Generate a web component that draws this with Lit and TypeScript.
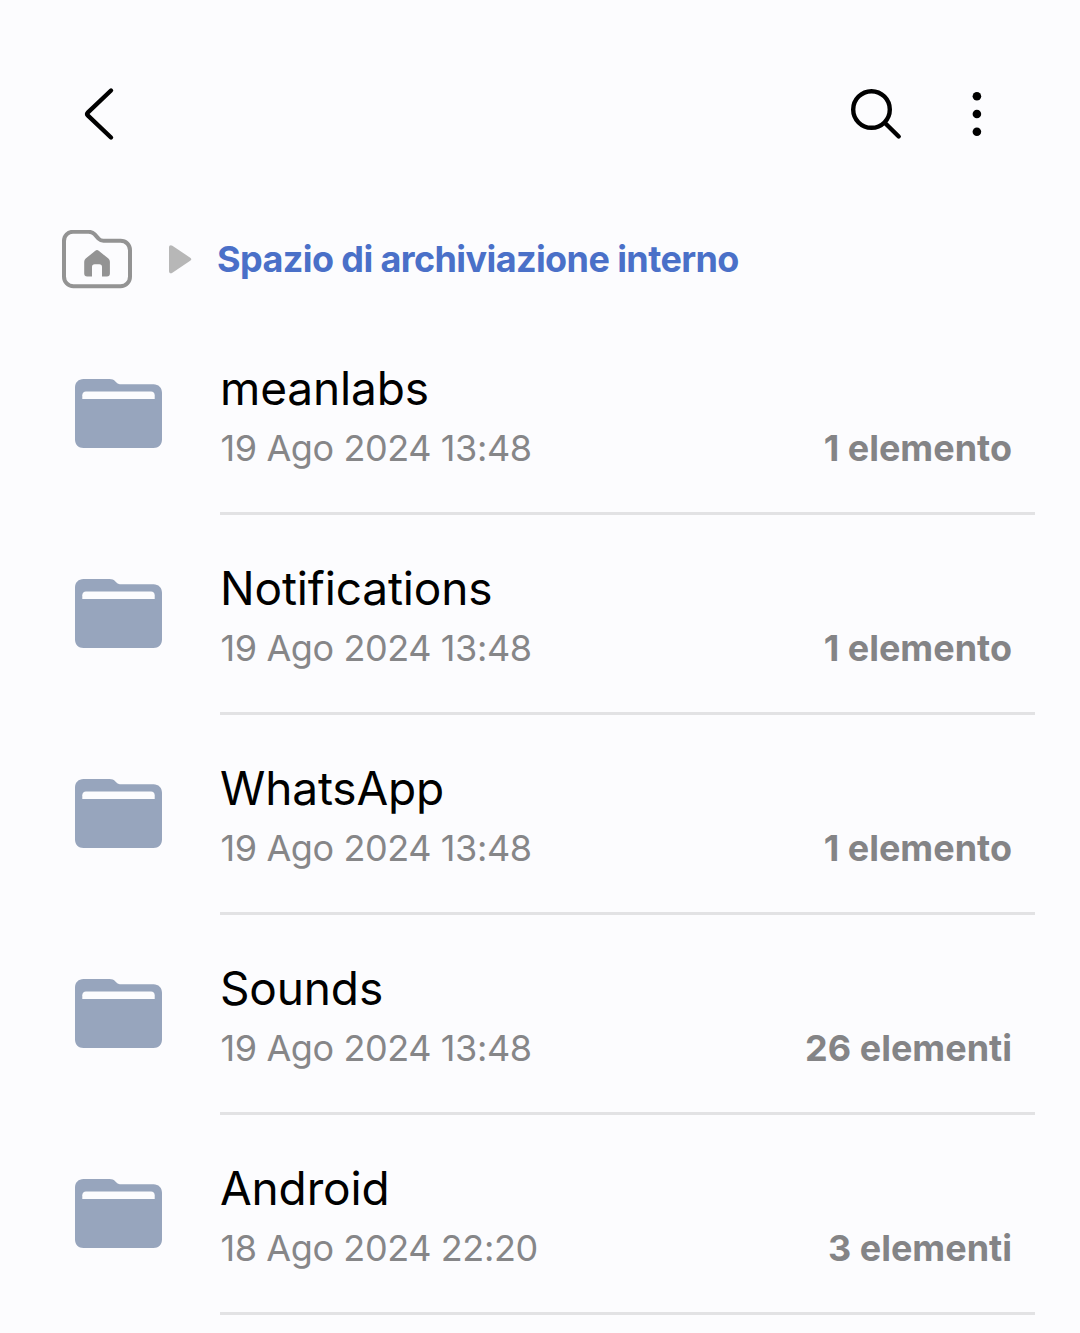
import { LitElement, html, css, svg } from 'lit';
import { customElement, property } from 'lit/decorators.js';

interface Entry {
  name: string;
  date: string;
  count: string;
}

const entries: Entry[] = [
  { name: 'meanlabs', date: '19 Ago 2024 13:48', count: '1 elemento' },
  { name: 'Notifications', date: '19 Ago 2024 13:48', count: '1 elemento' },
  { name: 'WhatsApp', date: '19 Ago 2024 13:48', count: '1 elemento' },
  { name: 'Sounds', date: '19 Ago 2024 13:48', count: '26 elementi' },
  { name: 'Android', date: '18 Ago 2024 22:20', count: '3 elementi' },
];

const folderShape = svg`
  <path fill="#97a5bd" d="M8.5 0H34.5C37 0 38.8.8 40.4 2.4L42 4.1C42.8 4.9 43.6 5.2 44.8 5.2H78.5C83.5 5.2 87 8.7 87 13.7V60.5C87 65.5 83.5 69 78.5 69H8.5C3.5 69 0 65.5 0 60.5V8.5C0 3.5 3.5 0 8.5 0Z"/>
  <path fill="#fcfcfe" d="M7.3 20V16.2C7.3 14 8.8 12.5 11 12.5H76C78.2 12.5 79.7 14 79.7 16.2V20Z"/>`;

@customElement('folder-row')
class FolderRow extends LitElement {
  @property({ attribute: false }) entry!: Entry;

  static styles = css`
    :host { display: block; }
    .row { display: flex; height: 200px; padding: 0 45px 0 75px; box-sizing: border-box; }
    .icon { flex: none; width: 87px; height: 69px; margin: 64px 58px 0 0; }
    .body {
      flex: 1; box-sizing: border-box; padding: 43px 23px 0 0;
      border-bottom: 3px solid #e2e2e4;
    }
    .name { font-size: 46px; line-height: 60px; letter-spacing: -0.15px; color: #000; }
    .meta {
      display: flex; justify-content: space-between; margin-top: 5px;
      font-size: 36px; line-height: 50px; color: #868688;
    }
    .date { letter-spacing: -0.4px; padding-left: 0.5px; }
    .count { font-weight: 700; color: #848486; }
  `;

  render() {
    return html`
      <div class="row">
        <svg class="icon" viewBox="0 0 87 69">${folderShape}</svg>
        <div class="body">
          <div class="name">${this.entry.name}</div>
          <div class="meta">
            <span class="date">${this.entry.date}</span>
            <span class="count">${this.entry.count}</span>
          </div>
        </div>
      </div>`;
  }
}

@customElement('app-root')
class AppRoot extends LitElement {
  static styles = css`
    :host {
      display: block; height: 1333px; overflow: hidden; background: #fcfcfe;
      font-family: Inter, Roboto, "Liberation Sans", sans-serif;
    }
    svg { display: block; flex: none; }
    .bar { display: flex; align-items: center; height: 60px; padding: 84px 92px 0 80px; }
    .search { margin-left: auto; margin-right: 62px; }
    .path { display: flex; align-items: center; height: 60px; padding: 86px 0 0 60px; }
    .arrow { margin-left: 34px; margin-right: 24px; }
    .title {
      font-size: 36px; line-height: 50px; font-weight: 700; letter-spacing: -0.6px;
      color: #4a70c8; white-space: nowrap; padding-bottom: 2px;
    }
    .list { padding-top: 25px; }
  `;

  render() {
    return html`
      <header class="bar">
        <svg width="40" height="60" viewBox="0 0 40 60" fill="none" stroke="#000" stroke-width="4.4" stroke-linecap="round" stroke-linejoin="round">
          <path d="M31 6.5 8 28.3Q6.3 30 8 31.7L31 53.5"/>
        </svg>
        <svg class="search" width="54" height="60" viewBox="0 0 54 60" fill="none" stroke="#000" stroke-width="4.4" stroke-linecap="round">
          <circle cx="23.5" cy="25.5" r="18.3"/>
          <path d="M37 39 50.7 52.5"/>
        </svg>
        <svg width="24" height="60" viewBox="0 0 24 60">
          <circle cx="12.9" cy="12.2" r="4.3"/>
          <circle cx="12.9" cy="30" r="4.3"/>
          <circle cx="12.9" cy="47.7" r="4.3"/>
        </svg>
      </header>
      <nav class="path">
        <svg width="74" height="60" viewBox="0 0 74 60">
          <path fill="none" stroke="#939393" stroke-width="4" stroke-linejoin="round" d="M13 1.8H28.5C31 1.8 32.8 2.5 34.5 4.2L38.5 8.7C40 10.2 41.4 10.8 43.5 10.8H60.5C66 10.8 70 14.8 70 20.3V46.5C70 52 66 56.3 60.5 56.3H13.5C8 56.3 4 52 4 46.5V11C4 5.5 8 1.8 13 1.8Z"/>
          <path fill="#939393" d="M35.3 20.7Q37 19.2 38.7 20.7L48.4 28.6Q49.9 29.9 49.9 31.7V43.5Q49.9 46.5 46.9 46.5H42V37Q42 34.3 39.3 34.3H34.7Q32 34.3 32 37V46.5H27.2Q24.2 46.5 24.2 43.5V31.7Q24.2 29.9 25.7 28.6Z"/>
        </svg>
        <svg class="arrow" width="25" height="60" viewBox="0 0 25 60">
          <path fill="#b7b7b7" d="M1 17.5C1 15.4 2.6 14.5 4.4 15.7L22.2 27.7Q24.4 29.2 22.2 30.7L4.4 42.7C2.6 43.9 1 43 1 40.9Z"/>
        </svg>
        <span class="title">Spazio di archiviazione interno</span>
      </nav>
      <main class="list">
        ${entries.map((entry) => html`<folder-row .entry=${entry}></folder-row>`)}
      </main>`;
  }
}
